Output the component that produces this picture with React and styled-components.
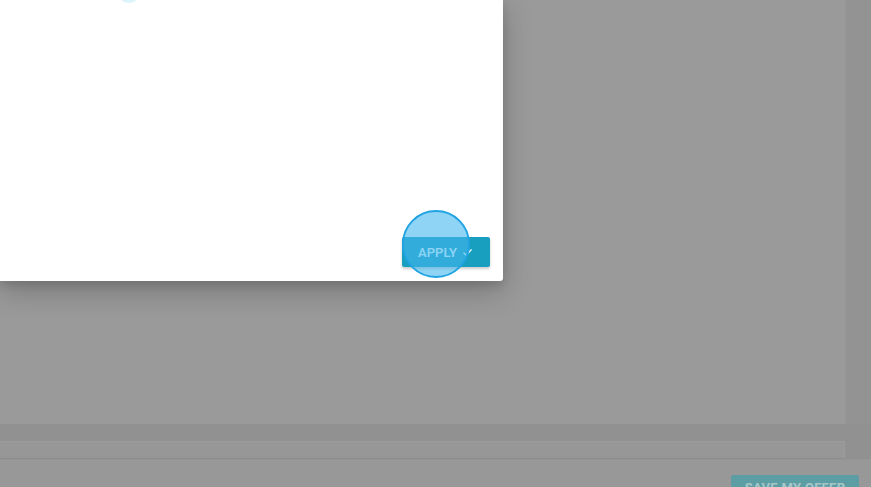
import React from "react";
import styled, { createGlobalStyle } from "styled-components";

const Global = createGlobalStyle`
  html, body { margin: 0; padding: 0; }
  body { width: 871px; height: 487px; overflow: hidden; background: #989898; font-family: Roboto, "Liberation Sans", sans-serif; }
  #root { position: relative; width: 871px; height: 487px; overflow: hidden; }
`;

const Page = styled.div`
  display: flex;
  flex-direction: column;
  width: 871px;
  height: 487px;
  overflow: hidden;
`;

const TopArea = styled.div`
  display: flex;
  flex: 0 0 424px;
`;

const Main = styled.div`
  flex: 1;
  background: #9a9a9a;
`;

const SideStrip = styled.div`
  width: 25px;
  background: #939393;
  border-left: 1px solid #979797;
`;

const Band = styled.div`
  flex: 0 0 17px;
  background: #919191;
`;

const InputRow = styled.div`
  display: flex;
  flex: 0 0 18px;
  background: #919191;
`;

const InputBox = styled.div`
  flex: 0 0 845px;
  background: #979797;
  border-top: 1px solid #9c9c9c;
  border-bottom: 1px solid #8c8c8c;
  border-right: 1px solid #9c9c9c;
  box-sizing: border-box;
`;

const Footer = styled.div`
  flex: 0 0 auto;
  display: flex;
  justify-content: flex-end;
  align-items: flex-start;
  padding: 15px 12px 0 0;
  background: #989898;
  border-top: 1px solid #959595;
`;

const SaveButton = styled.div`
  width: 128px;
  height: 32px;
  background: #5c9ea3;
  border-radius: 2px;
  color: #a8c7ca;
  font-weight: 700;
  font-size: 13px;
  text-align: center;
  line-height: 15px;
  padding-top: 5px;
  box-sizing: border-box;
  letter-spacing: 0.3px;
`;

const Modal = styled.div`
  position: absolute;
  left: 0;
  top: 0;
  width: 503px;
  height: 281px;
  background: #ffffff;
  border-radius: 0 0 3px 0;
  box-shadow: 0 10px 30px rgba(0, 0, 0, 0.22), 0 4px 10px rgba(0, 0, 0, 0.12);
  display: flex;
  justify-content: flex-end;
  align-items: flex-end;
  padding: 0 13px 14px 0;
  box-sizing: border-box;
  overflow: hidden;
`;

const ApplyButton = styled.div`
  position: relative;
  width: 88px;
  height: 30px;
  background: #189fbf;
  border-radius: 2px;
  box-shadow: 0 2px 3px rgba(0, 0, 0, 0.2);
  display: flex;
  align-items: center;
  justify-content: flex-start;
  padding-left: 16px;
  box-sizing: border-box;
  color: #ffffff;
  font-weight: 500;
  font-size: 13px;
  letter-spacing: 0.1px;
  gap: 5px;
`;

const Ripple = styled.div`
  position: absolute;
  left: ${(p) => p.$x - p.$r}px;
  top: ${(p) => p.$y - p.$r}px;
  width: ${(p) => p.$r * 2}px;
  height: ${(p) => p.$r * 2}px;
  border-radius: 50%;
  box-sizing: border-box;
  background: ${(p) => p.$fill};
  border: ${(p) => p.$border};
  pointer-events: none;
`;

export default function App() {
  return (
    <>
      <Global />
      <Page>
        <TopArea>
          <Main />
          <SideStrip />
        </TopArea>
        <Band />
        <InputRow>
          <InputBox />
        </InputRow>
        <Footer>
          <SaveButton>SAVE MY OFFER</SaveButton>
        </Footer>
      </Page>
      <Modal>
        <Ripple $x={129} $y={-9} $r={12} $fill="rgba(205, 240, 247, 0.7)" $border="none" />
        <ApplyButton>
          <span>APPLY</span>
          <svg width="11" height="11" viewBox="0 0 24 24" fill="none" stroke="#ffffff" strokeWidth="2.6" strokeLinecap="round" strokeLinejoin="round">
            <path d="M4 13l5 5L20 6" />
          </svg>
        </ApplyButton>
      </Modal>
      <Ripple $x={436} $y={244} $r={34} $fill="rgba(68, 183, 238, 0.6)" $border="2px solid #22a4e2" />
    </>
  );
}
